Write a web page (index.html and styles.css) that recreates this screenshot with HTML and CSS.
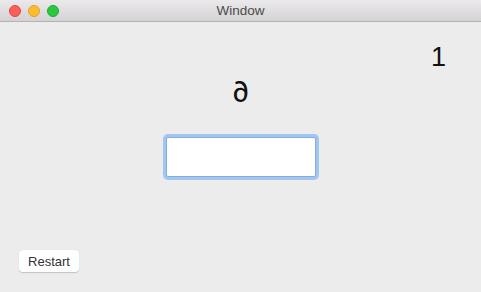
FILE: index.html
```html
<!DOCTYPE html>
<html lang="en">
<head>
  <meta charset="UTF-8" />
  <title>Window</title>
  <link rel="stylesheet" href="styles.css">
</head>
<body>
  <div class="window">
    <div class="titlebar">
      <div class="lights">
        <span class="light close"></span>
        <span class="light minimize"></span>
        <span class="light zoom"></span>
      </div>
      <div class="title">Window</div>
    </div>
    <div class="content">
      <div class="score">1</div>
      <div class="letter">&#8706;</div>
      <input type="text" class="answer" autofocus />
      <div class="actions">
        <button class="restart">Restart</button>
      </div>
    </div>
  </div>
</body>
</html>
```

FILE: styles.css
```css
html, body {
  margin: 0;
  height: 100%;
}

body {
  font-family: 'Liberation Sans', Arial, sans-serif;
  background-color: #ececec;
  color: #1a1a1a;
}

.window {
  height: 100%;
  display: flex;
  flex-direction: column;
  border-radius: 5px 5px 0 0;
  overflow: hidden;
}

.titlebar {
  height: 21px;
  border-bottom: 1px solid #b4b2b4;
  background: linear-gradient(#ebe9eb, #d4d2d4);
  display: flex;
  align-items: center;
  position: relative;
}

.lights {
  display: flex;
  gap: 7px;
  padding-left: 9px;
}

.light {
  width: 12px;
  height: 12px;
  border-radius: 50%;
  box-sizing: border-box;
}

.close {
  background-color: #fc5f57;
  border: 1px solid #e2463f;
}

.minimize {
  background-color: #fdbc2e;
  border: 1px solid #e0a028;
}

.zoom {
  background-color: #28c840;
  border: 1px solid #1daa2c;
}

.title {
  position: absolute;
  left: 0;
  right: 0;
  top: 0;
  line-height: 21px;
  text-align: center;
  font-size: 13.5px;
  color: #4a4a4a;
  pointer-events: none;
}

.content {
  flex: 1;
  display: flex;
  flex-direction: column;
  align-items: center;
}

.score {
  align-self: flex-end;
  margin: 19px 35px 0 0;
  font-size: 27px;
  line-height: 32px;
  color: #111;
}

.letter {
  margin-top: 3px;
  font-family: Inter, 'Noto Sans', sans-serif;
  font-size: 28px;
  line-height: 32px;
  color: #111;
}

.answer {
  margin-top: 29px;
  width: 150px;
  height: 40px;
  box-sizing: border-box;
  border: 1px solid #86acdf;
  border-radius: 2px;
  background: #fff;
  box-shadow: 0 0 0 3px #a2c6f2;
  outline: none;
  font-size: 16px;
  padding: 0 6px;
  caret-color: transparent;
}

.actions {
  margin-top: auto;
  align-self: stretch;
  padding: 0 0 20px 19px;
}

.restart {
  height: 22px;
  width: 60px;
  padding: 0;
  border: none;
  border-radius: 4px;
  background-color: #fff;
  box-shadow: 0 0.5px 1px rgba(0,0,0,0.18);
  font-family: 'Liberation Sans', Arial, sans-serif;
  font-size: 13px;
  color: #333;
}
```
